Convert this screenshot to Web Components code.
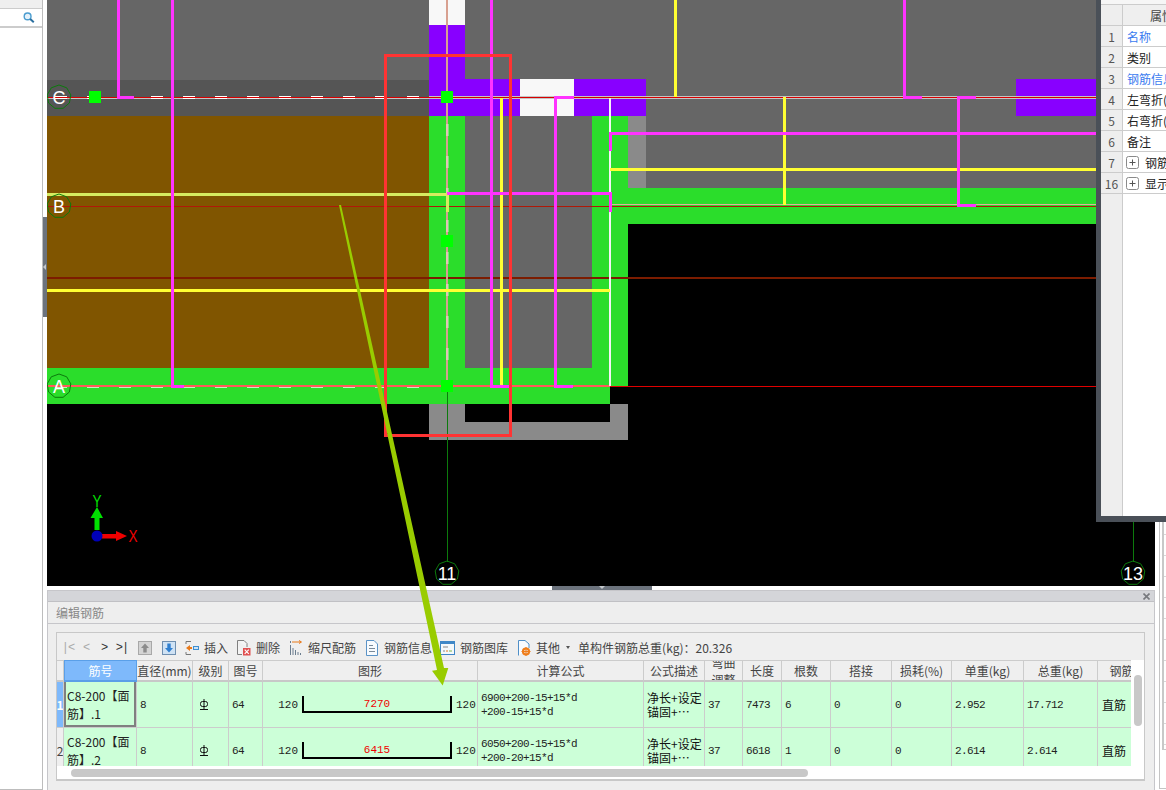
<!DOCTYPE html>
<html lang="zh">
<head>
<meta charset="utf-8">
<title>编辑钢筋</title>
<style>
  html, body { margin: 0; height: 790px; overflow: hidden; background: #fff; }
  body { position: relative; display: flex; font: 12px "Noto Sans CJK SC", "Liberation Sans", sans-serif; }
</style>
</head>
<body>
<side-panel></side-panel>
<split-gap></split-gap>
<main-column>
  <cad-canvas></cad-canvas>
  <split-bar></split-bar>
  <rebar-editor></rebar-editor>
</main-column>
<right-strip></right-strip>
<prop-window></prop-window>
<callout-arrow></callout-arrow>

<script>
(function() {
  const CJK = '"Noto Sans CJK SC", "Liberation Sans", sans-serif';

  class SidePanel extends HTMLElement {
    constructor() {
      super();
      this.attachShadow({ mode: 'open' });
      this.shadowRoot.innerHTML = `
        <style>
          :host { display: block; box-sizing: border-box; width: 43px; height: 790px; background: #fff;
                  border-right: 1px solid #bdbdbd; border-bottom: 1px solid #bdbdbd; }
          .top { height: 8px; background: #efefef; border-bottom: 1px solid #ccc; }
          .search { box-sizing: border-box; height: 19px; display: flex; justify-content: flex-end; align-items: center;
                    padding-right: 7px; border-bottom: 2px solid #ccc; }
        </style>
        <div class="top"></div>
        <div class="search">
          <svg width="12" height="11" viewBox="0 0 12 11">
            <circle cx="4.6" cy="4.4" r="3.4" fill="#e4f1fa" stroke="#4a9ccf" stroke-width="1.4"/>
            <path d="M7.2 7l3.6 3.2" stroke="#2a6f9f" stroke-width="2"/>
          </svg>
        </div>
      `;
    }
  }

  class SplitGap extends HTMLElement {
    constructor() {
      super();
      this.attachShadow({ mode: 'open' });
      this.shadowRoot.innerHTML = `
        <style>
          :host { display: block; width: 4px; flex: none; padding-top: 217px; }
          .handle { height: 100px; background: #6c737d; display: flex; align-items: center; }
          .handle i { width: 0; height: 0; border: 3px solid transparent; border-right: 3px solid #c4c8cc; border-left: 0; }
        </style>
        <div class="handle"><i></i></div>
      `;
    }
  }

  class MainColumn extends HTMLElement {
    constructor() {
      super();
      this.attachShadow({ mode: 'open' });
      this.shadowRoot.innerHTML = `
        <style>
          :host { display: flex; flex-direction: column; width: 1108px; flex: none; height: 790px; }
        </style>
        <slot></slot>
      `;
    }
  }

  class SplitBar extends HTMLElement {
    constructor() {
      super();
      this.attachShadow({ mode: 'open' });
      this.shadowRoot.innerHTML = `
        <style>
          :host { display: flex; justify-content: center; height: 4px; background: #fff; flex: none; padding-left: 2px; }
          .handle { width: 100px; background: #6c737d; display: flex; justify-content: center; }
          .handle i { width: 0; height: 0; border: 3px solid transparent; border-top: 3px solid #c4c8cc; border-bottom: 0; }
        </style>
        <div class="handle"><i></i></div>
      `;
    }
  }

  class CadCanvas extends HTMLElement {
    constructor() {
      super();
      this.attachShadow({ mode: 'open' });

      const rects = [
        // x, y, w, h, fill
        [47, 0, 1108, 586, '#000'],
        [47, 0, 1049, 80, '#666'],
        [646, 80, 450, 108, '#666'],
        [47, 80, 382, 36, '#555'],
        [465, 116, 127, 252, '#666'],
        [47, 116, 382, 252, '#805500'],
        [429, 116, 36, 252, '#2bdd2b'],
        [592, 116, 36, 270, '#2bdd2b'],
        [47, 368, 563, 36, '#2bdd2b'],
        [610, 368, 18, 18, '#2bdd2b'],
        [628, 116, 18, 72, '#8a8a8a'],
        [628, 188, 468, 36, '#2bdd2b'],
        [610, 188, 18, 36, '#2bdd2b'],
        [429, 0, 36, 25, '#f8f8f8'],
        [429, 25, 36, 91, '#8800ff'],
        [429, 79, 217, 37, '#8800ff'],
        [519.5, 79, 54.5, 37, '#f8f8f8'],
        [1016, 79, 80, 37, '#8800ff'],
        [429, 404, 199, 36, '#8a8a8a'],
        [465, 404, 145, 18, '#000'],
      ];
      const rectSvg = rects.map(r => `<rect x="${r[0]}" y="${r[1]}" width="${r[2]}" height="${r[3]}" fill="${r[4]}"/>`).join('');

      const mag = [
        'M118 0V97H134', 'M172 0V386H184', 'M491.5 0V386H510', 'M574 97H555.5V386H573',
        'M447 193.5H610.5V212', 'M1096 133.5H610.5V151', 'M904.5 0V97H922', 'M976 97H958.5V205H976',
      ];
      const yel = ['M47 290H610', 'M501.5 98V386', 'M675.5 0V97', 'M784.5 97V205', 'M610 169.5H1096'];

      const marks = [[95, 97], [447, 97], [447, 241], [447, 386]]
        .map(p => `<rect x="${p[0] - 6}" y="${p[1] - 6}" width="12" height="12" fill="#00ff00"/>`).join('');

      const octagon = (cx, cy, r) => {
        const pts = [];
        for (let i = 0; i < 9; i++) {
          const a = Math.PI * 2 * i / 9 - Math.PI / 2;
          pts.push((cx + r * Math.cos(a)).toFixed(1) + ',' + (cy + r * Math.sin(a)).toFixed(1));
        }
        return `<polygon points="${pts.join(' ')}" fill="none" stroke="#0c7a0c" stroke-width="1"/>`;
      };
      const axes = [['C', 59, 97], ['B', 59, 206], ['A', 59, 386], ['11', 447, 573], ['13', 1133, 573]]
        .map(a => `${octagon(a[1], a[2], 12)}<text x="${a[1]}" y="${a[2] + 6.5}" class="axis">${a[0]}</text>`).join('');

      this.shadowRoot.innerHTML = `
        <style>
          :host { display: block; width: 1108px; height: 586px; flex: none; background: #000; }
          svg { display: block; }
          .axis { font: 18px "Liberation Sans", sans-serif; fill: #fff; text-anchor: middle; }
          .xy { font: 17px "Liberation Sans", sans-serif; text-anchor: middle; }
        </style>
        <svg width="1108" height="586" viewBox="47 0 1108 586">
          <g shape-rendering="crispEdges">${rectSvg}</g>

          <!-- axis lines -->
          <g shape-rendering="crispEdges" fill="none">
            <path d="M47 98.5H1096" stroke="#c4c4c4" stroke-width="1"/>
            <path d="M429 96.5H1096" stroke="#c4c4c4" stroke-width="1"/>
            <path d="M55 97H429" stroke="#fff" stroke-width="3" stroke-dasharray="12 20"/>
            <path d="M47 97.5H1096" stroke="#d80000" stroke-width="1"/>
            <path d="M47 206H1096" stroke="#b01808" stroke-width="1"/>
            <path d="M610 204.5H1096" stroke="#e0b0a0" stroke-width="1"/>
            <path d="M47 278H1096" stroke="#7c1c00" stroke-width="2"/>
            <path d="M55 386H429" stroke="#fff" stroke-width="3" stroke-dasharray="12 20" opacity=".7"/>
            <path d="M47 386H610" stroke="#ff5a5a" stroke-width="1.5"/>
            <path d="M610 386.5H1096" stroke="#e00000" stroke-width="1"/>
            <path d="M447 0V386" stroke="#d8a090" stroke-width="2"/>
            <path d="M447 124V386" stroke="#fff" stroke-width="3" stroke-dasharray="12 20" opacity=".35"/>
            <path d="M447.5 386V562" stroke="#0c7a0c" stroke-width="1"/>
            <path d="M1133.5 522V562" stroke="#0c7a0c" stroke-width="1"/>
            <path d="M609.5 98V386" stroke="#f4f4f4" stroke-width="2"/>
            <path d="M47 194.5H447V212" stroke="#d6ec60" stroke-width="3"/>
          </g>

          <g fill="none" shape-rendering="crispEdges">
            <path d="${yel.join('')}" stroke="#ffff33" stroke-width="3"/>
            <path d="${mag.join('')}" stroke="#ff33ff" stroke-width="3"/>
          </g>

          <g shape-rendering="crispEdges">${marks}</g>

          <rect x="385.5" y="55.5" width="125" height="380" fill="none" stroke="#ff3333" stroke-width="3" shape-rendering="crispEdges"/>

          ${axes}

          <!-- xy gizmo -->
          <path d="M94.5 530V518H90.5L97 507L103 518H99.5V530Z" fill="#00e000"/>
          <path d="M102 534H116V531L127 536L116 541V538.5H102Z" fill="#f00000"/>
          <circle cx="97" cy="536" r="5.5" fill="#0000b8"/>
          <text class="xy" fill="#00e000" transform="translate(97 507) scale(.8 1)">Y</text>
          <text class="xy" fill="#f00000" transform="translate(133 542) scale(.8 1)">X</text>
        </svg>
      `;
    }
  }

  class ToolBtn extends HTMLElement {
    constructor() {
      super();
      this.attachShadow({ mode: 'open' });
      this.shadowRoot.innerHTML = `
        <style>
          :host { display: inline-flex; align-items: center; gap: 5px; flex: none; color: #444; white-space: nowrap; }
          ::slotted(svg) { display: block; flex: none; }
        </style>
        <slot name="icon"></slot><slot></slot>
      `;
    }
  }

  class RebarToolbar extends HTMLElement {
    constructor() {
      super();
      this.attachShadow({ mode: 'open' });
      this.shadowRoot.innerHTML = `
        <style>
          :host { display: flex; align-items: center; box-sizing: border-box; height: 27px; padding: 2px 0 0 2px;
                  background: #efefef; font: 12px ${CJK}; color: #444; }
          .nav { width: 18px; flex: none; text-align: center; font: 12px "Liberation Mono", monospace; letter-spacing: -1px; }
          .off { color: #aaa; }
          .on { color: #333; }
          svg { display: block; flex: none; }
          .tri { width: 0; height: 0; margin-left: 6px; border: 2.5px solid transparent; border-top: 3px solid #555; border-bottom: 0; }
          .total { margin-left: 8px; white-space: nowrap; }
        </style>
        <span class="nav off">|&lt;</span><span class="nav off">&lt;</span><span class="nav on">&gt;</span><span class="nav on">&gt;|</span>

        <svg style="margin-left:7px" width="14" height="14" viewBox="0 0 14 14">
          <rect x=".5" y=".5" width="13" height="13" fill="#d4d4d4" stroke="#a8a8a8"/>
          <path d="M7 2.5L11 7H8.7V11.5H5.3V7H3Z" fill="#8c8c8c"/>
        </svg>
        <svg style="margin-left:10px" width="14" height="14" viewBox="0 0 14 14">
          <rect x=".5" y=".5" width="13" height="13" fill="#cfe2f4" stroke="#6f8fb0"/>
          <path d="M7 11.5L3 7H5.3V2.5H8.7V7H11Z" fill="#2f7fd0"/>
        </svg>

        <tool-btn style="margin-left:9px">
          <svg slot="icon" width="14" height="16" viewBox="0 0 14 16">
            <path d="M1 1.5H6M1 14.5H6M1 1.5V4M1 12V14.5" stroke="#777" fill="none"/>
            <path d="M1 8L5 5V7H7V9H5V11Z" fill="#e87a1c"/>
            <rect x="8.5" y="6.5" width="5" height="3" fill="#cfe4f6" stroke="#3f8fd0"/>
          </svg>插入
        </tool-btn>
        <tool-btn style="margin-left:8px">
          <svg slot="icon" width="15" height="16" viewBox="0 0 15 16">
            <path d="M1.5 .5H8L11 3.5V7M6 14.5H1.5V.5" fill="#f4f4f4" stroke="#808080"/>
            <rect x="7" y="8" width="7.5" height="7.5" fill="#e05050"/>
            <path d="M8.7 9.7L12.8 13.8M12.8 9.7L8.7 13.8" stroke="#fff" stroke-width="1.2"/>
          </svg>删除
        </tool-btn>
        <tool-btn style="margin-left:10px">
          <svg slot="icon" width="13" height="16" viewBox="0 0 13 16">
            <path d="M.5 1V3M.5 5V15M3 8V15M5.5 10V15M8 12V15M10.5 13V15" stroke="#6b7d8f" fill="none"/>
            <path d="M2 2H11M9 .5L11.5 2L9 3.5" stroke="#e87a1c" fill="none"/>
          </svg>缩尺配筋
        </tool-btn>
        <tool-btn style="margin-left:9px">
          <svg slot="icon" width="14" height="16" viewBox="0 0 14 16">
            <path d="M1.5 .5H9L12.5 4V15.5H1.5Z" fill="#f8fbfe" stroke="#5b93c7"/>
            <path d="M4 5.5H8M4 8.5H10M4 11.5H10" stroke="#7a8a99"/>
          </svg>钢筋信息
        </tool-btn>
        <tool-btn style="margin-left:8px">
          <svg slot="icon" width="15" height="14" viewBox="0 0 15 14">
            <rect x=".5" y=".5" width="14" height="13" fill="#f4f8fb" stroke="#3f87c7"/>
            <rect x="0" y="0" width="15" height="3" fill="#3f87c7"/>
            <path d="M3 6H8M3 10H5" stroke="#888"/><path d="M6 10H8" stroke="#e87a1c"/><path d="M9 10H12" stroke="#7ab648"/>
          </svg>钢筋图库
        </tool-btn>
        <tool-btn style="margin-left:9px">
          <svg slot="icon" width="14" height="16" viewBox="0 0 14 16">
            <path d="M1.5 15.5V.5H8L12 4V8" fill="#f8fbfe" stroke="#4f8fc7"/>
            <circle cx="9" cy="11.5" r="3" fill="none" stroke="#ef7d1a" stroke-width="2.2"/>
            <path d="M9 7V16M4.5 11.5H13.5" stroke="#ef7d1a" stroke-width="1.2"/>
          </svg>其他
        </tool-btn>
        <i class="tri"></i>
        <span class="total">单构件钢筋总重(kg)：20.326</span>
      `;
    }
  }

  class RebarShape extends HTMLElement {
    constructor() {
      super();
      this.attachShadow({ mode: 'open' });
      this.shadowRoot.innerHTML = `
        <style>
          :host { display: flex; align-items: center; width: 100%; font: 11px "Liberation Mono", monospace; color: #222; }
          .end { flex: none; }
          .l { width: 35px; text-align: right; margin-right: 4px; }
          .r { margin-left: 4px; }
          .bar { box-sizing: border-box; flex: none; width: 150px; height: 17px; border: 2px solid #000; border-top: 0;
                 display: flex; justify-content: center; align-items: center; color: #f00000; }
        </style>
        <span class="end l">120</span>
        <div class="bar"><slot></slot></div>
        <span class="end r">120</span>
      `;
    }
  }

  class RebarTable extends HTMLElement {
    constructor() {
      super();
      this.attachShadow({ mode: 'open' });

      const heads = ['', '筋号', '直径(mm)', '级别', '图号', '图形', '计算公式', '公式描述', '弯曲调整', '长度', '根数', '搭接', '损耗(%)', '单重(kg)', '总重(kg)', '钢筋'];
      const rows = [
        { no: '1', name: 'C8-200【面<br>筋】.1', len: '7270', f1: '6900+200-15+15*d', f2: '+200-15+15*d', total: '7473', cnt: '6', w: '2.952', tw: '17.712' },
        { no: '2', name: 'C8-200【面<br>筋】.2', len: '6415', f1: '6050+200-15+15*d', f2: '+200-20+15*d', total: '6618', cnt: '1', w: '2.614', tw: '2.614' },
      ];
      const grade = `<svg class="grade" width="10" height="11" viewBox="0 0 10 11"><rect x="1.5" y="2.5" width="7" height="5" rx="2" fill="none" stroke="#111"/><path d="M5 0V10M1 10.5H9" stroke="#111"/></svg>`;

      const headHtml = heads.map((h, i) => {
        let cls = 'h';
        if (i === 1) cls += ' sel';
        if (i === 8) cls += ' wrap';
        return `<div class="${cls}">${h}</div>`;
      }).join('');

      const rowHtml = rows.map((r, i) => `
        <div class="c rn${i === 0 ? ' cur' : ''}">${r.no}</div>
        <div class="c name${i === 0 ? ' active' : ''}"><span>${r.name}</span></div>
        <div class="c n">8</div>
        <div class="c">${grade}</div>
        <div class="c n">64</div>
        <div class="c shape"><rebar-shape>${r.len}</rebar-shape></div>
        <div class="c n f">${r.f1}<br>${r.f2}</div>
        <div class="c desc">净长+设定<br>锚固+⋯</div>
        <div class="c n">37</div>
        <div class="c n">${r.total}</div>
        <div class="c n">${r.cnt}</div>
        <div class="c n">0</div>
        <div class="c n">0</div>
        <div class="c n">${r.w}</div>
        <div class="c n">${r.tw}</div>
        <div class="c cjk">直筋</div>
      `).join('');

      this.shadowRoot.innerHTML = `
        <style>
          :host { display: block; width: 1074px; height: 106px; overflow: hidden; font: 12px ${CJK}; color: #111; }
          .grid { display: grid; width: max-content;
                  grid-template-columns: 7px 73px 56px 36px 34px 215px 166px 61px 38px 39px 49px 61px 60px 72px 74px 48px;
                  grid-template-rows: 22px 46px 46px; }
          .h { box-sizing: border-box; display: flex; align-items: center; justify-content: center; overflow: hidden;
               background: #efefef; color: #444; white-space: nowrap; padding-top: 0;
               border-right: 1px solid #ccc; border-top: 1px solid #ccc; border-bottom: 2px solid #c8c8c8; }
          .h.sel { background: #7eb9fb; color: #fff; border: 1px solid #5a9fe8; border-bottom: 2px solid #5a9fe8; }
          .h.wrap { white-space: normal; line-height: 17px; text-align: center; padding: 0 4px; }
          .c { box-sizing: border-box; display: flex; align-items: center; padding-left: 3px; overflow: hidden;
               background: #ccffd8; border-right: 1px solid #ccc; border-bottom: 1px solid #ccc; white-space: nowrap; }
          .n { font: 11px "Liberation Mono", monospace; letter-spacing: -.6px; color: #222; }
          .f { line-height: 14px; padding-top: 1px; }
          .desc { line-height: 14px; padding-left: 3px; color: #111; }
          .cjk { padding-left: 4px; }
          .rn { padding: 0; background: #efefef; justify-content: center; color: #444; font-size: 12px; }
          .rn.cur { background: #7eb9fb; color: #fff; font-weight: bold; }
          .name { line-height: 18px; padding-left: 3px; color: #222; }
          .name.active { box-shadow: inset 2px 0 #808080, inset -2px 0 #808080, inset 0 -2px #808080; }
          .shape { padding: 0; border-right: 1px solid #ccc; }
          .grade { display: block; margin-left: 3px; }
        </style>
        <div class="grid">${headHtml}${rowHtml}</div>
      `;
    }
  }

  class RebarEditor extends HTMLElement {
    constructor() {
      super();
      this.attachShadow({ mode: 'open' });
      this.shadowRoot.innerHTML = `
        <style>
          :host { display: block; box-sizing: border-box; flex: none; height: 200px; background: #eee;
                  border: 1px solid #c6c6ca; border-bottom: 0; font: 12px ${CJK}; }
          .bar { height: 10px; background: #d4d5d9; border-bottom: 1px solid #c0c0c4; display: flex; justify-content: flex-end; align-items: center; padding-right: 4px; }
          .bar svg { display: block; }
          .title { box-sizing: border-box; height: 22px; padding-left: 8px; display: flex; align-items: center; color: #888; border-bottom: 1px solid #c6c6ca; }
          .box { box-sizing: border-box; height: 149px; margin: 8px 9px 0 8px; background: #fff; border: 1px solid #c8c8c8; border-bottom: 2px solid #c8c8c8; }
          .body { display: flex; height: 106px; }
          .vtrack { width: 13px; flex: none; padding: 15px 0 0 3px; box-sizing: border-box; }
          .vthumb { width: 8px; height: 51px; background: #c8c8c8; border-radius: 4px; }
          .htrack { height: 13px; padding: 3px 0 0 14px; box-sizing: border-box; }
          .hthumb { width: 737px; height: 8px; background: #c8c8c8; border-radius: 4px; }
        </style>
        <div class="bar">
          <svg width="7" height="7" viewBox="0 0 7 7"><path d="M.5 .5L6.5 6.5M6.5 .5L.5 6.5" stroke="#77797e" stroke-width="1.6"/></svg>
        </div>
        <div class="title">编辑钢筋</div>
        <div class="box">
          <rebar-toolbar></rebar-toolbar>
          <div class="body">
            <rebar-table></rebar-table>
            <div class="vtrack"><div class="vthumb"></div></div>
          </div>
          <div class="htrack"><div class="hthumb"></div></div>
        </div>
      `;
    }
  }

  class RightStrip extends HTMLElement {
    constructor() {
      super();
      this.attachShadow({ mode: 'open' });
      this.shadowRoot.innerHTML = `
        <style>
          :host { display: block; box-sizing: border-box; width: 11px; flex: none; height: 789px; padding: 0 0 0 4px; }
          .outer { box-sizing: border-box; height: 100%; border-left: 1px solid #c4c4c4; border-bottom: 1px solid #c4c4c4; padding-left: 2px; }
          .inner { height: 750px; border-left: 2px solid #c8c8c8; border-bottom: 1px solid #c8c8c8; box-sizing: border-box;
                   background: repeating-linear-gradient(to bottom, transparent 0, transparent 20px, #d8d8d8 20px, #d8d8d8 21px); background-position: 0 10px; }
        </style>
        <div class="outer"><div class="inner"></div></div>
      `;
    }
  }

  class PropWindow extends HTMLElement {
    constructor() {
      super();
      this.attachShadow({ mode: 'open' });

      const rows = [
        ['1', '名称', 'link'], ['2', '类别', ''], ['3', '钢筋信息', 'link'], ['4', '左弯折(mm)', ''],
        ['5', '右弯折(mm)', ''], ['6', '备注', ''], ['7', '钢筋业务属性', 'plus'], ['16', '显示样式', 'plus'],
      ];
      const plus = `<svg class="plus" width="13" height="13" viewBox="0 0 13 13"><rect x=".5" y=".5" width="12" height="12" rx="2" fill="#fff" stroke="#8a8a8a"/><path d="M3.5 6.5H9.5M6.5 3.5V9.5" stroke="#555"/></svg>`;
      const rowHtml = rows.map(r => `
        <div class="no">${r[0]}</div>
        <div class="val ${r[2]}">${r[2] === 'plus' ? plus : ''}<span>${r[1]}</span></div>
      `).join('');

      this.shadowRoot.innerHTML = `
        <style>
          :host { position: absolute; left: 1096px; top: 0; box-sizing: border-box; width: 70px; height: 522px;
                  background: #fff; border-left: 5px solid #4a5058; border-bottom: 6px solid #4a5058;
                  font: 12px ${CJK}; color: #222; display: block; }
          .wrap { height: 100%; display: grid; grid-template-columns: 22px 43px; grid-template-rows: 5px 21px repeat(8, 21px) 1fr; overflow: hidden; }
          .top { grid-column: 1 / 3; background: #f6f6f6; border-bottom: 1px solid #ccc; box-sizing: border-box; }
          .corner, .no, .rest { background: #eee; border-right: 1px solid #ccc; box-sizing: border-box; }
          .corner, .no { border-bottom: 1px solid #ccc; }
          .no { display: flex; align-items: center; justify-content: center; color: #555; font-size: 12px; }
          .head { background: #efefef; border-bottom: 1px solid #ccc; box-sizing: border-box; padding-left: 27px; white-space: nowrap; overflow: hidden; display: flex; align-items: center; color: #444; }
          .val { box-sizing: border-box; display: flex; align-items: center; padding-left: 4px; white-space: nowrap; overflow: hidden; border-bottom: 1px solid #ccc; }
          .val span { flex: none; }
          .link { color: #3a7bf0; }
          .plus { padding-left: 0; }
          svg.plus { flex: none; margin: 0 6px 0 3px; display: block; }
        </style>
        <div class="wrap">
          <div class="top"></div>
          <div class="corner"></div><div class="head">属性名称</div>
          ${rowHtml}
          <div class="rest"></div><div></div>
        </div>
      `;
    }
  }

  class CalloutArrow extends HTMLElement {
    constructor() {
      super();
      this.attachShadow({ mode: 'open' });
      this.shadowRoot.innerHTML = `
        <style>
          :host { position: absolute; left: 0; top: 0; width: 1166px; height: 790px; display: block; pointer-events: none; }
          svg { display: block; }
        </style>
        <svg width="1166" height="790" viewBox="0 0 1166 790">
          <polygon points="339,205 341,205 444,668 448.3,668 442.7,685.5 432,670.7 437,670" fill="#99cc00"/>
        </svg>
      `;
    }
  }

  customElements.define('side-panel', SidePanel);
  customElements.define('split-gap', SplitGap);
  customElements.define('main-column', MainColumn);
  customElements.define('split-bar', SplitBar);
  customElements.define('cad-canvas', CadCanvas);
  customElements.define('tool-btn', ToolBtn);
  customElements.define('rebar-toolbar', RebarToolbar);
  customElements.define('rebar-shape', RebarShape);
  customElements.define('rebar-table', RebarTable);
  customElements.define('rebar-editor', RebarEditor);
  customElements.define('right-strip', RightStrip);
  customElements.define('prop-window', PropWindow);
  customElements.define('callout-arrow', CalloutArrow);
})();
</script>
</body>
</html>
